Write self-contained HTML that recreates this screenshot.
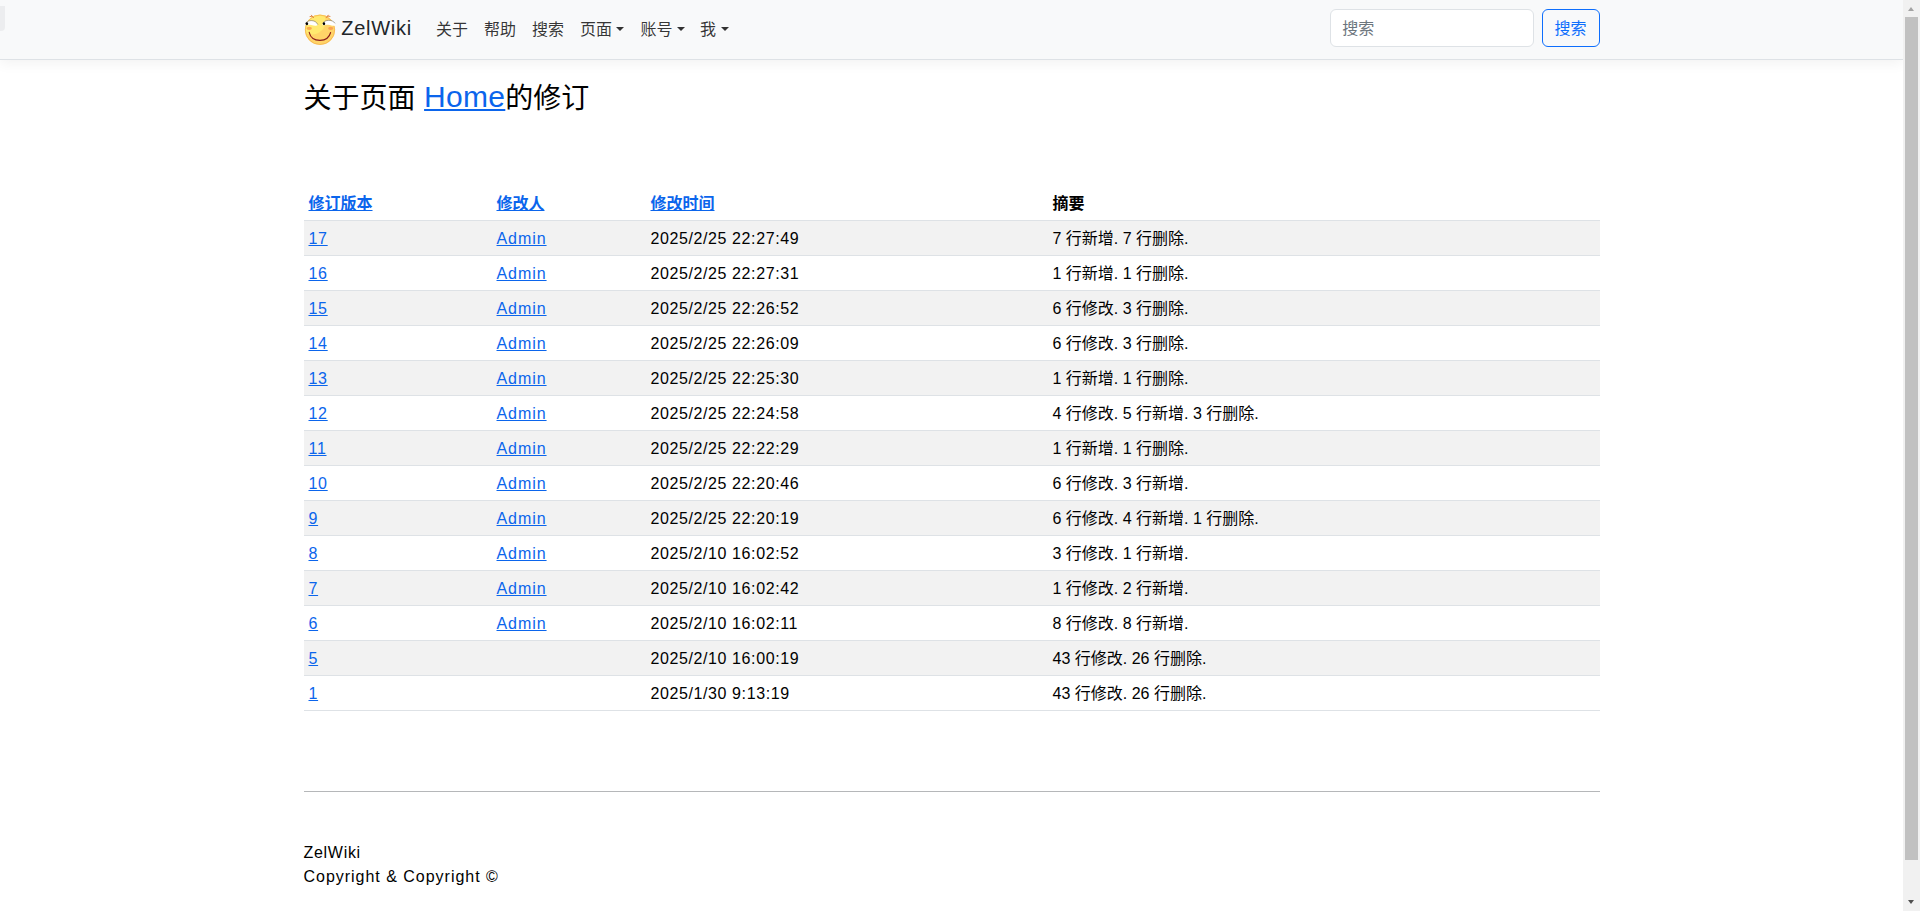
<!DOCTYPE html>
<html lang="zh-CN">
<head>
<meta charset="utf-8">
<title>ZelWiki - Home 的修订</title>
<style>
*,*::before,*::after{box-sizing:border-box}
html,body{margin:0;padding:0}
html{overflow:hidden}
body{width:1920px;height:911px;overflow:hidden;position:relative;background:#fff;color:#212529;
  font-family:"Liberation Sans","Noto Sans CJK SC",sans-serif;font-size:16px;line-height:24px;
  -webkit-text-size-adjust:100%}
a{color:#0b65ec;text-decoration:underline}
.page{position:absolute;left:0;top:0;width:1903px;height:911px;overflow:hidden}
.container{width:1320px;margin:0 auto;padding:0 12px}
/* navbar */
.navbar{height:60px;background:#f8f9fa;border-bottom:1px solid #dee2e6;box-shadow:0 4px 12px rgba(0,0,0,.05);position:relative}
.tab{position:absolute;left:0;top:6px;width:5px;height:25px;background:#ecedef;border-radius:0 0 4px 0}
.logo{position:absolute;left:300px;top:10px;width:40px;height:40px;display:block}
.brand{position:absolute;left:341.2px;top:13px;font-size:20px;line-height:30px;color:#212529;text-decoration:none;letter-spacing:.75px;white-space:nowrap}
.nav{position:absolute;left:428px;top:10px;display:flex;list-style:none;margin:0;padding:0}
.nav li{flex:none}
.nav a{display:block;padding:8px;color:rgba(0,0,0,.8);text-decoration:none;white-space:nowrap;line-height:24px}
.caret{display:inline-block;margin-left:4px;vertical-align:4px;border-top:4.5px solid;border-right:4px solid transparent;border-left:4px solid transparent;border-bottom:0;width:0;height:0}
.inp{position:absolute;left:1330px;top:9px;width:203.5px;height:38px;border:1px solid #dee2e6;border-radius:6px;background:#fff;padding:7px 11.3px 5px;color:#6c757d;line-height:24px}
.btn{position:absolute;left:1541.5px;top:9px;width:58px;height:38px;border:1px solid #0d6efd;border-radius:6px;color:#0d6efd;padding:7px 12px 5px;line-height:24px;background:transparent;white-space:nowrap}
/* content */
h3{font-size:28px;line-height:34px;height:34px;font-weight:400;margin:0;color:#000}
main{color:#000}
table{width:100%;border-collapse:collapse;color:#000}
th,td{padding:6px 5px 4px;height:35px;text-align:left;border-bottom:1px solid #dee2e6;vertical-align:middle;line-height:24px}
th{font-weight:700;padding:7px 5px 3px}
td.n a{letter-spacing:.7px}
td.u a{letter-spacing:.94px}
td.d{letter-spacing:.6px}
h3 a{font-size:30px;letter-spacing:.3px;margin-left:.8px;position:relative;top:-1.5px;text-decoration-thickness:2px;text-underline-offset:1.5px}
tbody tr:nth-child(odd) td{background:#f2f2f2}
hr{border:0;border-top:1px solid #b5b7b9;margin:0}
footer{color:#000}
/* scrollbar */
.sb{position:absolute;left:1903px;top:0;width:17px;height:911px;background:#f1f1f1}
.sb .thumb{position:absolute;left:2px;top:17px;width:13px;height:843px;background:#c1c1c1}
.sb .up,.sb .down{position:absolute;left:4.6px;width:0;height:0;border-left:3.9px solid transparent;border-right:3.9px solid transparent}
.sb .up{top:6.8px;border-bottom:4.4px solid #a3a3a3}
.sb .down{top:899.8px;border-top:4.4px solid #505050}
</style>
</head>
<body>
<div class="page">
  <nav class="navbar">
    <div class="tab"></div>
    <svg class="logo" viewBox="0 0 40 40">
      <defs><clipPath id="fc"><circle cx="20" cy="19.8" r="15"/></clipPath></defs>
      <circle cx="20" cy="19.8" r="15" fill="#ffd468"/>
      <g clip-path="url(#fc)"><circle cx="12" cy="11" r="13.6" fill="#ffe96f"/></g>
      <circle cx="20" cy="19.8" r="14.7" fill="none" stroke="#f5b24e" stroke-width=".8"/>
      <path d="M10 6.6 L12.1 6.2 L13.6 7.6 M11.4 5.2 L12.2 6.3" stroke="#dd7a35" stroke-width=".9" fill="none" stroke-linecap="round"/>
      <path d="M26.3 7.6 L27.6 6.1 L30 6.4 M28.2 5.2 L27.6 6.2" stroke="#dd7a35" stroke-width=".9" fill="none" stroke-linecap="round"/>
      <path d="M5.4 13.9 C6.6 9.9 15.4 8.8 17.9 14.7 C16.6 16.3 14 15.8 11.2 15 C9 14.5 7 14.8 5.5 15.2 Z" fill="#fff"/><path d="M5.4 13.9 C6.6 9.9 15.4 8.8 17.9 14.7" fill="none" stroke="#4a4030" stroke-width=".45"/>
      <path d="M22.5 13.9 C23.6 9.7 32.6 8.8 35 13.4 L35 15.8 C33 16 30.4 14.9 28.2 14.7 C26 14.5 24 15 22.7 15.3 Z" fill="#fff"/><path d="M22.5 13.9 C23.6 9.7 32.6 8.8 35 13.4" fill="none" stroke="#4a4030" stroke-width=".45"/>
      <ellipse cx="6.9" cy="13.7" rx="1.3" ry="1.45" fill="#000"/>
      <ellipse cx="24" cy="13.8" rx="1.2" ry="1.45" fill="#000"/>
      <ellipse cx="9.2" cy="18.3" rx="2.7" ry="1.6" fill="#fba94c"/>
      <ellipse cx="30.7" cy="18.3" rx="2.6" ry="1.6" fill="#fba251"/>
      <path d="M9.2 22.3 Q11 30.2 20 30.4 Q28.6 30.2 30.6 22.5" stroke="#8a1c1c" stroke-width="1.1" fill="none" stroke-linecap="round"/>
    </svg>
    <a class="brand">ZelWiki</a>
    <ul class="nav">
      <li style="width:48px"><a>关于</a></li>
      <li style="width:48px"><a>帮助</a></li>
      <li style="width:48px"><a>搜索</a></li>
      <li style="width:60.6px"><a>页面<span class="caret"></span></a></li>
      <li style="width:59.4px"><a>账号<span class="caret" style="margin-left:4.4px"></span></a></li>
      <li style="width:44px"><a>我<span class="caret" style="margin-left:4.9px"></span></a></li>
    </ul>
    <div class="inp">搜索</div><div class="btn">搜索</div>
  </nav>
  <div class="container">
    <main>
      <h3 style="margin-top:21px;margin-bottom:1px">关于页面 <a>Home</a>的修订</h3>
      <table style="margin-top:70px">
        <thead><tr><th style="width:188px"><a>修订版本</a></th><th style="width:154px"><a>修改人</a></th><th style="width:402px"><a>修改时间</a></th><th>摘要</th></tr></thead>
        <tbody>
        <tr><td class="n"><a>17</a></td><td class="u"><a>Admin</a></td><td class="d">2025/2/25 22:27:49</td><td>7 行新增. 7 行删除.</td></tr>
        <tr><td class="n"><a>16</a></td><td class="u"><a>Admin</a></td><td class="d">2025/2/25 22:27:31</td><td>1 行新增. 1 行删除.</td></tr>
        <tr><td class="n"><a>15</a></td><td class="u"><a>Admin</a></td><td class="d">2025/2/25 22:26:52</td><td>6 行修改. 3 行删除.</td></tr>
        <tr><td class="n"><a>14</a></td><td class="u"><a>Admin</a></td><td class="d">2025/2/25 22:26:09</td><td>6 行修改. 3 行删除.</td></tr>
        <tr><td class="n"><a>13</a></td><td class="u"><a>Admin</a></td><td class="d">2025/2/25 22:25:30</td><td>1 行新增. 1 行删除.</td></tr>
        <tr><td class="n"><a>12</a></td><td class="u"><a>Admin</a></td><td class="d">2025/2/25 22:24:58</td><td>4 行修改. 5 行新增. 3 行删除.</td></tr>
        <tr><td class="n"><a>11</a></td><td class="u"><a>Admin</a></td><td class="d">2025/2/25 22:22:29</td><td>1 行新增. 1 行删除.</td></tr>
        <tr><td class="n"><a>10</a></td><td class="u"><a>Admin</a></td><td class="d">2025/2/25 22:20:46</td><td>6 行修改. 3 行新增.</td></tr>
        <tr><td class="n"><a>9</a></td><td class="u"><a>Admin</a></td><td class="d">2025/2/25 22:20:19</td><td>6 行修改. 4 行新增. 1 行删除.</td></tr>
        <tr><td class="n"><a>8</a></td><td class="u"><a>Admin</a></td><td class="d">2025/2/10 16:02:52</td><td>3 行修改. 1 行新增.</td></tr>
        <tr><td class="n"><a>7</a></td><td class="u"><a>Admin</a></td><td class="d">2025/2/10 16:02:42</td><td>1 行修改. 2 行新增.</td></tr>
        <tr><td class="n"><a>6</a></td><td class="u"><a>Admin</a></td><td class="d">2025/2/10 16:02:11</td><td>8 行修改. 8 行新增.</td></tr>
        <tr><td class="n"><a>5</a></td><td class="u"></td><td class="d">2025/2/10 16:00:19</td><td>43 行修改. 26 行删除.</td></tr>
        <tr><td class="n"><a>1</a></td><td class="u"></td><td class="d">2025/1/30 9:13:19</td><td>43 行修改. 26 行删除.</td></tr>
        </tbody>
      </table>
    </main>
    <hr style="margin-top:80px">
    <footer style="margin-top:49px"><span style="letter-spacing:.7px">ZelWiki</span><br><span style="letter-spacing:.98px">Copyright &amp; Copyright ©</span></footer>
  </div>
</div>
<div class="sb"><div class="up"></div><div class="thumb"></div><div class="down"></div></div>
</body>
</html>
